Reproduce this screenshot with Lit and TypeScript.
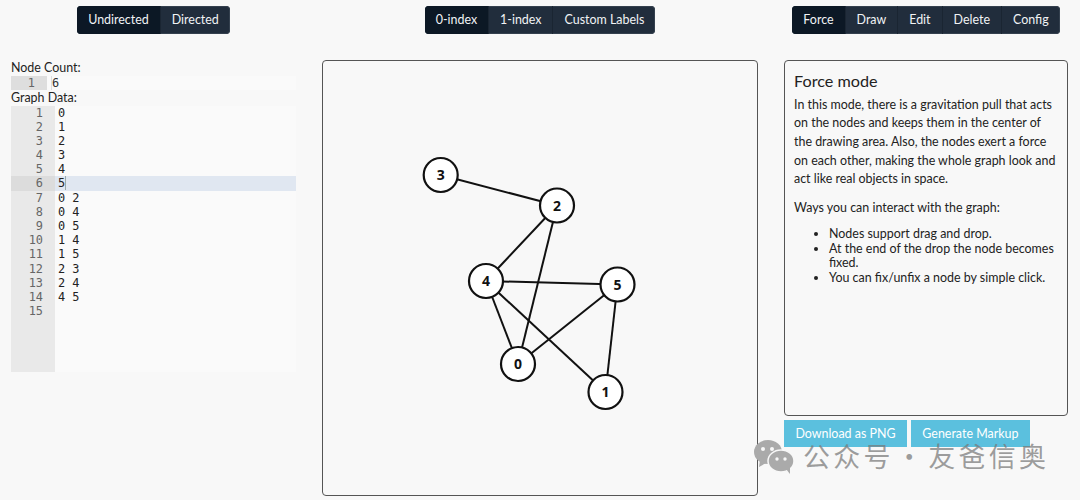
import { LitElement, html, css, svg } from "lit";
import { customElement } from "lit/decorators.js";

const nodes: Record<number, [number, number]> = {
  0: [518, 364], 1: [605.5, 392], 2: [557, 205.5], 3: [440.7, 175], 4: [486, 281], 5: [617.5, 284.5],
};
const edges = [[0,2],[0,4],[0,5],[1,4],[1,5],[2,3],[2,4],[4,5]];
const lines = ["0","1","2","3","4","5","0 2","0 4","0 5","1 4","1 5","2 3","2 4","4 5",""];

@customElement("app-root")
export class AppRoot extends LitElement {
  static styles = css`
    :host { display: block; width: 1080px; height: 500px; overflow: hidden; position: relative; background: #f8f8f8; font-family: "Lato", sans-serif; font-size: 12.45px; color: #333; line-height: 18px; }
    .page { display: grid; grid-template-columns: 285px 436px 284px; column-gap: 26px; padding: 6px 0 0 11px; }
    .col { display: flex; flex-direction: column; min-width: 0; }
    .group { display: flex; align-self: center; height: 28px; border-radius: 4px; overflow: hidden; background: #212d3c; box-shadow: inset 0 0 0 1px #34404e; color: #f1f3f5; }
    .group span { display: flex; align-items: center; padding: 0 11px; border-left: 1px solid #1a2532; }
    .group span:first-child { border-left: 0; }
    .group span.on { background: #0c1825; }
    .left { padding-top: 26px; }
    .label { height: 15px; line-height: 15px; color: #222; }
    .mono { font-family: "DejaVu Sans Mono", monospace; font-size: 11.9px; line-height: 14.2px; }
    .count { display: flex; height: 14px; background: #fafafa; margin-top: 1px; }
    .count .gut { width: 36px; background: #dedede; color: #666; text-align: right; padding-right: 12px; box-sizing: border-box; }
    .count .txt { color: #333; border-left: 1px solid #ddd; margin-left: 4px; }
    .editor { display: flex; height: 266px; background: #fafafa; margin-top: 0.5px; }
    .gutter { width: 44px; background: #e9e9e9; color: #666; text-align: right; flex: none; }
    .gutter div { padding-right: 12px; height: 14.2px; }
    .gutter div.on { background: #dcdcdc; }
    .code { flex: 1; color: #222; }
    .code div { padding-left: 3px; height: 14.2px; white-space: pre; }
    .code div.on { background: #e0e7f1; }
    .caret { border-right: 1px solid #9aa; }
    .canvas { width: 436px; height: 436px; box-sizing: border-box; border: 1px solid #555; border-radius: 4px; margin-top: 26px; position: relative; }
    .canvas svg { position: absolute; left: -323px; top: -61px; width: 1080px; height: 500px; }
    .node { fill: #fff; stroke: #111; stroke-width: 2.2px; }
    .edge { stroke: #111; stroke-width: 2px; }
    .nlabel { font-family: "Open Sans", sans-serif; font-weight: 700; font-size: 14px; fill: #111; text-anchor: middle; }
    .info { width: 284px; height: 356px; box-sizing: border-box; border: 1px solid #555; border-radius: 4px; margin-top: 26px; padding: 9px 9px; color: #222; line-height: 18.7px; }
    h3 { font-weight: 400; font-size: 16.2px; line-height: 22px; margin: 0 0 3.6px; color: #222; }
    p { margin: 0 0 9.5px; }
    ul { margin: 0; padding-left: 35px; line-height: 14.8px; margin-top: 6.4px; }
    .btns { display: flex; gap: 4px; margin-top: 4px; }
    .btn { height: 27px; display: flex; align-items: center; padding: 0 11.4px; background: #5bc0de; color: #fff; }
    .mark { position: absolute; left: 753px; top: 438px; display: flex; align-items: center; gap: 8px; color: rgba(120,120,120,.72); font-family: "Noto Sans CJK SC", sans-serif; font-size: 27px; line-height: 36px; letter-spacing: 3.2px; word-spacing: -7px; }
    .mark svg { width: 42px; height: 36px; }
  `;

  render() {
    return html`<div class="page">
      <div class="col">
        <div class="group"><span class="on">Undirected</span><span>Directed</span></div>
        <div class="left">
          <div class="label">Node Count:</div>
          <div class="count mono"><div class="gut">1</div><div class="txt">6</div></div>
          <div class="label">Graph Data:</div>
          <div class="editor mono">
            <div class="gutter">${lines.map((_, i) => html`<div class=${i === 5 ? "on" : ""}>${i + 1}</div>`)}</div>
            <div class="code">${lines.map((l, i) => html`<div class=${i === 5 ? "on" : ""}>${i === 5 ? html`<span class="caret">${l}</span>` : l}</div>`)}</div>
          </div>
        </div>
      </div>
      <div class="col">
        <div class="group"><span class="on">0-index</span><span>1-index</span><span>Custom Labels</span></div>
        <div class="canvas">
          <svg viewBox="0 0 1080 500">
            ${edges.map(([a, b]) => svg`<line class="edge" x1=${nodes[a][0]} y1=${nodes[a][1]} x2=${nodes[b][0]} y2=${nodes[b][1]}></line>`)}
            ${Object.entries(nodes).map(([k, [x, y]]) => svg`<circle class="node" cx=${x} cy=${y} r="17"></circle><text class="nlabel" x=${x} y=${y + 5}>${k}</text>`)}
          </svg>
        </div>
      </div>
      <div class="col">
        <div class="group"><span class="on">Force</span><span>Draw</span><span>Edit</span><span>Delete</span><span>Config</span></div>
        <div class="info">
          <h3>Force mode</h3>
          <p>In this mode, there is a gravitation pull that acts on the nodes and keeps them in the center of the drawing area. Also, the nodes exert a force on each other, making the whole graph look and act like real objects in space.</p>
          <p>Ways you can interact with the graph:</p>
          <ul>
            <li>Nodes support drag and drop.</li>
            <li>At the end of the drop the node becomes fixed.</li>
            <li>You can fix/unfix a node by simple click.</li>
          </ul>
        </div>
        <div class="btns"><div class="btn">Download as PNG</div><div class="btn">Generate Markup</div></div>
      </div>
    </div>
    <div class="mark">
      <svg viewBox="0 0 42 36">
        <ellipse cx="15" cy="14" rx="14" ry="12" fill="#aaa"></ellipse>
        <path d="M7 22 L6 29 L13 25 Z" fill="#aaa"></path>
        <ellipse cx="28" cy="23" rx="13" ry="11" fill="#aaa" stroke="#f8f8f8" stroke-width="1.5"></ellipse>
        <path d="M33 31 L37 36 L37 29 Z" fill="#aaa"></path>
        <circle cx="10" cy="11" r="2" fill="#f8f8f8"></circle><circle cx="19" cy="11" r="2" fill="#f8f8f8"></circle>
        <circle cx="24" cy="21" r="1.7" fill="#f8f8f8"></circle><circle cx="32" cy="21" r="1.7" fill="#f8f8f8"></circle>
      </svg>
      <span>公众号 · 友爸信奥</span>
    </div>`;
  }
}
